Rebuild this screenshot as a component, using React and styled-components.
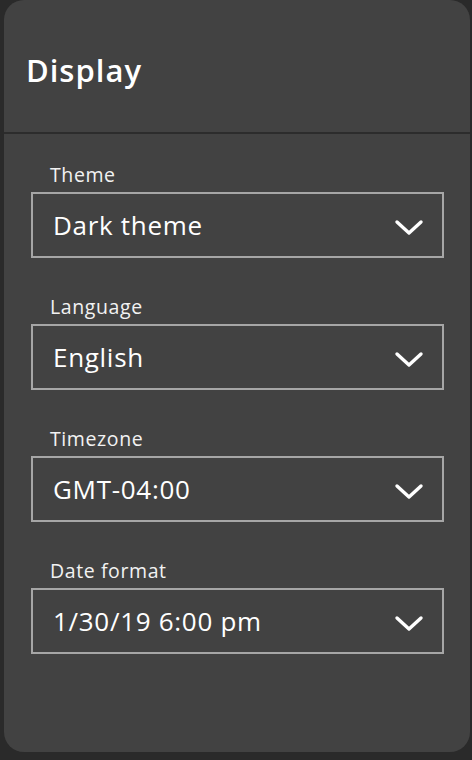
import styled, { createGlobalStyle } from 'styled-components';

const GlobalStyle = createGlobalStyle`
  html, body {
    margin: 0;
    padding: 0;
    background: #2a2a2a;
    font-family: "Open Sans", "Liberation Sans", sans-serif;
  }
`;

const fields = [
  { label: 'Theme', value: 'Dark theme' },
  { label: 'Language', value: 'English' },
  { label: 'Timezone', value: 'GMT-04:00' },
  { label: 'Date format', value: '1/30/19 6:00 pm' }
];

const Panel = styled.section`
  margin: 0 2px 0 4px;
  height: 752px;
  background: #424242;
  border-radius: 20px;
  display: flex;
  flex-direction: column;
  color: #fff;
`;

const Header = styled.header`
  height: 134px;
  border-bottom: 2px solid #2c2c2c;
  display: flex;
  align-items: center;
  padding: 8px 22px 0;
  box-sizing: border-box;
`;

const Title = styled.h1`
  margin: 0;
  font-size: 31px;
  font-weight: 600;
  letter-spacing: 1px;
`;

const Body = styled.div`
  padding: 28px 26px 0 27px;
  display: flex;
  flex-direction: column;
  gap: 36px;
`;

const Field = styled.div`
  display: flex;
  flex-direction: column;
  gap: 5px;
`;

const Label = styled.label`
  font-size: 19.5px;
  line-height: 25px;
  padding-left: 19px;
  letter-spacing: 0.6px;
  color: #f2f2f2;
`;

const SelectBox = styled.div`
  height: 66px;
  box-sizing: border-box;
  border: 2px solid #a6a6a6;
  display: flex;
  align-items: center;
  justify-content: space-between;
  padding: 0 18px 0 20px;
  font-size: 26px;
  letter-spacing: 0.7px;
  cursor: pointer;
`;

const Chevron = () => (
  <svg width="30" height="18" viewBox="0 0 30 18" style={{ marginTop: 5 }}>
    <polyline
      points="3,3 15,14 27,3"
      fill="none"
      stroke="#fff"
      strokeWidth="3.4"
      strokeLinecap="round"
      strokeLinejoin="round"
    />
  </svg>
);

export default function App() {
  return (
    <>
      <GlobalStyle />
      <Panel>
        <Header>
          <Title>Display</Title>
        </Header>
        <Body>
          {fields.map((f) => (
            <Field key={f.label}>
              <Label>{f.label}</Label>
              <SelectBox role="button">
                <span>{f.value}</span>
                <Chevron />
              </SelectBox>
            </Field>
          ))}
        </Body>
      </Panel>
    </>
  );
}
